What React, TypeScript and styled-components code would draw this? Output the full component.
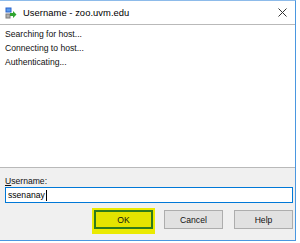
import React from "react";
import styled, { createGlobalStyle } from "styled-components";

const Global = createGlobalStyle`
  html, body { margin: 0; padding: 0; background: #ffffff; }
  body { font-family: "Liberation Sans", Arial, sans-serif; }
`;

const Window = styled.div`
  width: 296px;
  height: 241px;
  border-right: 1px solid #4a97e0;
  border-bottom: 1px solid #4a97e0;
  border-top: 1px solid #8dbbea;
  box-sizing: border-box;
  display: flex;
  flex-direction: column;
  background: #ffffff;
`;

const TitleBar = styled.div`
  height: 23px;
  display: flex;
  align-items: center;
  padding: 0 8px 0 5px;
  background: #ffffff;
  flex-shrink: 0;
`;

const Title = styled.span`
  margin-left: 6px;
  font-size: 9.4px;
  color: #000;
  flex: 1;
  letter-spacing: 0.05px;
`;

const Log = styled.div`
  flex: 1;
  border-top: 1px solid #b9b9b9;
  border-bottom: 1px solid #b9b9b9;
  padding: 2px 5px 0;
  background: #ffffff;
`;

const LogLine = styled.div`
  font-size: 8.6px;
  line-height: 14px;
  color: #111;
`;

const Panel = styled.div`
  height: 72px;
  flex-shrink: 0;
  background: #f0f0f0;
  padding: 7px 2px 0 5px;
  box-sizing: border-box;
  display: flex;
  flex-direction: column;
`;

const Label = styled.div`
  font-size: 8.6px;
  line-height: 12px;
  color: #111;
  u { text-decoration: underline; }
`;

const Input = styled.div`
  height: 16px;
  box-sizing: border-box;
  border: 1px solid #0078d7;
  background: #ffffff;
  display: flex;
  align-items: center;
  padding-left: 2px;
  font-size: 8.6px;
  color: #000;
`;

const Caret = styled.span`
  display: inline-block;
  width: 1px;
  height: 11px;
  background: #000;
  margin-left: 1px;
`;

const Buttons = styled.div`
  margin-top: 7px;
  display: flex;
  justify-content: flex-end;
  gap: 11px;
`;

const Button = styled.div<{ $primary?: boolean }>`
  width: 59px;
  height: 19px;
  box-sizing: border-box;
  display: flex;
  align-items: center;
  justify-content: center;
  font-size: 8.6px;
  color: #111;
  background: ${(p) => (p.$primary ? "#e4e400" : "#e1e1e1")};
  border: ${(p) => (p.$primary ? "2px solid #2f7a1c" : "1px solid #adadad")};
  box-shadow: ${(p) => (p.$primary ? "0 0 0 2px #eaea00, 0 3px 0 2px #eaea00" : "none")};
`;

const AppIcon = () => (
  <svg width="12" height="12" viewBox="0 0 12 12">
    <rect x="0.5" y="0.5" width="6" height="5" fill="#2a63c9" />
    <rect x="1.5" y="1.5" width="4" height="3" fill="#5a9cf0" />
    <rect x="0.5" y="6.5" width="5" height="5" fill="#7d7d7d" />
    <rect x="1.5" y="7.5" width="3" height="3" fill="#b0b0b0" />
    <path d="M5 6 L8 6 L8 4 L11.5 7.5 L8 11 L8 9 L5 9 Z" fill="#2fa52f" />
  </svg>
);

const CloseIcon = () => (
  <svg width="9" height="9" viewBox="0 0 9 9">
    <path d="M0.5 0.5 L8.5 8.5 M8.5 0.5 L0.5 8.5" stroke="#333" strokeWidth="1" />
  </svg>
);

export default function App() {
  return (
    <>
      <Global />
      <Window>
        <TitleBar>
          <AppIcon />
          <Title>Username - zoo.uvm.edu</Title>
          <CloseIcon />
        </TitleBar>
        <Log>
          <LogLine>Searching for host...</LogLine>
          <LogLine>Connecting to host...</LogLine>
          <LogLine>Authenticating...</LogLine>
        </Log>
        <Panel>
          <Label>
            <u>U</u>sername:
          </Label>
          <Input>
            ssenanay
            <Caret />
          </Input>
          <Buttons>
            <Button $primary>OK</Button>
            <Button>Cancel</Button>
            <Button>Help</Button>
          </Buttons>
        </Panel>
      </Window>
    </>
  );
}
